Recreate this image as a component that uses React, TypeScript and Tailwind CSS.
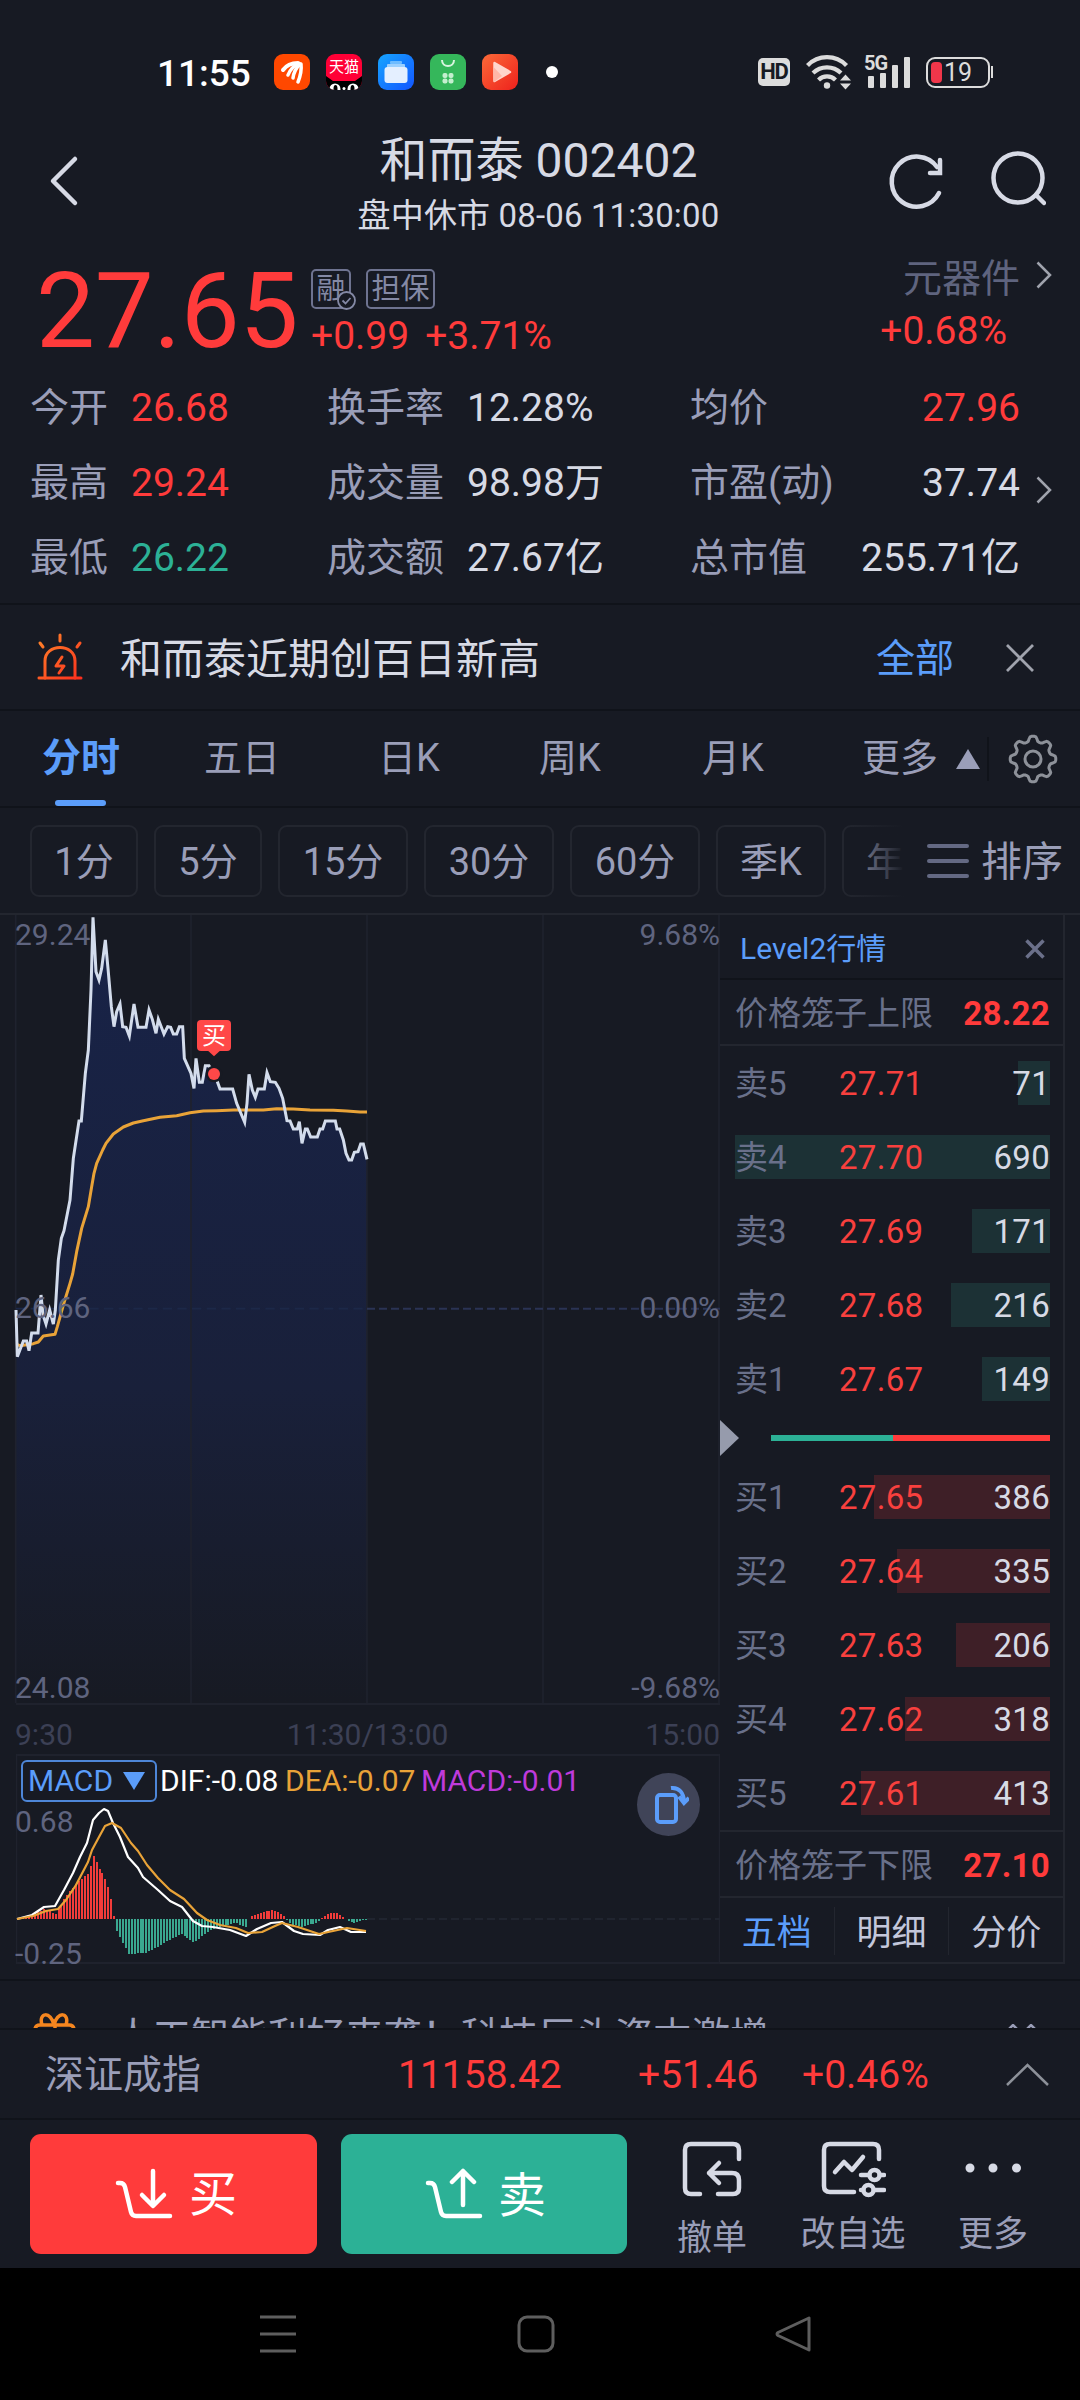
import type { ReactNode } from "react";

const sells = [
    { label: "卖5", price: "27.71", volume: 71 },
    { label: "卖4", price: "27.70", volume: 690 },
    { label: "卖3", price: "27.69", volume: 171 },
    { label: "卖2", price: "27.68", volume: 216 },
    { label: "卖1", price: "27.67", volume: 149 },
];

const buys = [
    { label: "买1", price: "27.65", volume: 386 },
    { label: "买2", price: "27.64", volume: 335 },
    { label: "买3", price: "27.63", volume: 206 },
    { label: "买4", price: "27.62", volume: 318 },
    { label: "买5", price: "27.61", volume: 413 },
];

const maxVolume = 690;

const stats = [
    ["今开", "26.68", "text-[#ff3b3b]", "换手率", "12.28%", "均价", "27.96", "text-[#ff3b3b]"],
    ["最高", "29.24", "text-[#ff3b3b]", "成交量", "98.98万", "市盈(动)", "37.74", "text-[#d7dae5]"],
    ["最低", "26.22", "text-[#2cb196]", "成交额", "27.67亿", "总市值", "255.71亿", "text-[#d7dae5]"],
];

const periods = [
    { name: "1分", width: "w-[108px]" },
    { name: "5分", width: "w-[108px]" },
    { name: "15分", width: "w-[130px]" },
    { name: "30分", width: "w-[130px]" },
    { name: "60分", width: "w-[130px]" },
    { name: "季K", width: "w-[110px]" },
    { name: "年K", width: "w-[110px]" },
];

// Las coordenadas del precio van a 3 unidades por pixel
const priceLine =
    "48,1200 52,1340 70,1293 80,1293 87,1322 95,1269 114,1269 123,1155 129,1215 138,1242 149,1200 160,1242 166,1200 175,1050 184,985 192,962 210,870 220,745 237,633 244,633 256,490 265,420 273,240 279,22 288,185 297,210 305,175 316,90 324,175 334,290 342,350 350,305 360,282 368,350 378,352 388,378 402,282 414,352 438,352 447,300 457,328 468,370 475,328 492,372 503,350 512,352 520,372 530,372 538,350 548,350 553,445 573,490 582,535 588,445 598,517 607,517 616,467 627,467 642,492 652,515 660,537 698,537 710,580 734,637 741,580 747,493 757,540 766,562 774,537 793,537 801,488 811,515 826,517 837,535 848,565 861,632 870,633 880,657 892,657 898,635 906,700 916,657 922,657 932,681 952,681 960,657 968,657 976,633 1006,633 1011,657 1019,657 1030,690 1038,730 1047,750 1055,750 1063,727 1074,725 1082,702 1090,702 1101,748";

const averageLine =
    "50,1303 60,1307 100,1301 115,1296 130,1278 165,1273 172,1250 190,1185 210,1120 218,1092 230,1025 245,955 265,890 275,830 282,790 290,760 308,720 318,700 340,672 370,651 400,639 430,632 480,622 530,617 570,608 610,603 650,602 700,600 790,600 830,596 880,597 930,600 1000,601 1040,603 1080,606 1101,606";

const difLine =
    "17,1919 32,1915 44,1907 55,1906 64,1890 73,1873 80,1857 87,1843 93,1820 99,1813 104,1809 108,1811 113,1823 120,1837 128,1857 138,1868 143,1877 158,1890 170,1901 182,1907 193,1921 202,1926 213,1927 230,1930 246,1936 257,1929 271,1923 282,1922 294,1931 303,1934 320,1935 328,1930 340,1927 351,1932 366,1932";

const deaLine =
    "17,1919 33,1916 46,1911 58,1909 66,1900 76,1885 88,1862 92,1850 99,1837 105,1826 112,1823 121,1828 131,1843 138,1851 147,1865 158,1878 170,1890 184,1899 197,1913 207,1920 220,1925 236,1928 248,1933 262,1932 275,1926 282,1923 298,1927 319,1934 333,1931 347,1928 366,1931";

const macdShape = [
    [16, 0], [30, 3], [43, 10], [55, 5], [64, 22], [78, 38], [88, 46], [93, 63], [99, 50], [105, 38],
    [109, 25], [112, 10], [113.5, 0], [115, -10], [120, -20], [128, -35], [145, -34], [158, -27],
    [170, -20], [181, -15], [193, -24], [205, -14], [215, -9], [235, -4], [245, -8], [248, 0],
    [250, 3], [262, 7], [272, 9], [282, 4], [285, 0], [290, -5], [300, -8], [315, -4], [320, 0],
    [325, 4], [335, 7], [345, 0], [352, -4], [368, 0],
];

function macdAt(x: number) {
    for (let i = 1; i < macdShape.length; i++) {
        const [x0, y0] = macdShape[i - 1];
        const [x1, y1] = macdShape[i];
        if (x <= x1) return y0 + ((y1 - y0) * (x - x0)) / (x1 - x0);
    }
    return 0;
}

const macdBars = Array.from({ length: 120 }, (_, i) => {
    const x = Math.round(16.5 + i * 2.93);
    return { x, h: Math.round(macdAt(x)) };
});

function StatusBar() {
    return (
        <div className="flex h-[118px] items-center pt-[26px] pl-[157px] text-white">
            <span className="w-[117px] pt-[2px] text-[37px] leading-none font-medium">11:55</span>
            <div className="flex gap-4">
                <svg width="36" height="36" viewBox="0 0 36 36">
                    <rect width="36" height="36" rx="9" fill="#ff4800" />
                    <g fill="none" stroke="#fff" strokeLinecap="round">
                        <path d="M9 16 Q14 9 24 9" strokeWidth="4" />
                        <path d="M14 21 Q17 13 25 9.500" strokeWidth="3.500" />
                        <path d="M19 24 Q20 16 26 10" strokeWidth="3.500" />
                        <path d="M24 28 Q28 18 27 10" strokeWidth="3.500" />
                    </g>
                </svg>
                <div className="relative h-9 w-9 overflow-hidden rounded-[9px] bg-[#ff0036]">
                    <svg className="absolute inset-0" width="36" height="36" viewBox="0 0 36 36">
                        <path d="M0 22 L7 27 H29 L36 22 V36 H0Z" fill="#000" />
                        <circle cx="9" cy="35" r="5.500" fill="#fff" />
                        <circle cx="27" cy="35" r="5.500" fill="#fff" />
                        <ellipse cx="9.500" cy="35" rx="2" ry="4" fill="#000" />
                        <ellipse cx="26.500" cy="35" rx="2" ry="4" fill="#000" />
                        <circle cx="18" cy="34.500" r="1.500" fill="#fff" />
                    </svg>
                    <span className="absolute top-[6px] left-[3px] text-[15px] leading-none">天猫</span>
                </div>
                <svg width="36" height="36" viewBox="0 0 36 36">
                    <defs>
                        <linearGradient id="files" x1="0" y1="0" x2="1" y2="1">
                            <stop offset="0" stopColor="#16a5ff" />
                            <stop offset="1" stopColor="#1355ff" />
                        </linearGradient>
                    </defs>
                    <rect width="36" height="36" rx="9" fill="url(#files)" />
                    <rect x="12" y="7" width="12" height="3" rx="1" fill="#6fbcff" />
                    <rect x="9" y="10" width="18" height="4" rx="1" fill="#9bd0ff" />
                    <rect x="6.500" y="13" width="23" height="16" rx="3" fill="#e4efff" />
                </svg>
                <svg width="36" height="36" viewBox="0 0 36 36">
                    <rect width="36" height="36" rx="9" fill="#35b75b" />
                    <path d="M12 6 C12 14 24 14 24 6" fill="none" stroke="#d8f5df" strokeWidth="2" />
                    <g fill="#c4efcf">
                        <rect x="12.500" y="19" width="5" height="5" rx="2" />
                        <rect x="18.500" y="19" width="5" height="5" rx="2" />
                        <rect x="12.500" y="24.500" width="5" height="5" rx="2" />
                        <rect x="18.500" y="24.500" width="5" height="5" rx="2" />
                    </g>
                </svg>
                <svg width="36" height="36" viewBox="0 0 36 36">
                    <defs>
                        <linearGradient id="video" x1="0" y1="0" x2="1" y2="1">
                            <stop offset="0" stopColor="#fb6a38" />
                            <stop offset="1" stopColor="#ee211c" />
                        </linearGradient>
                    </defs>
                    <rect width="36" height="36" rx="9" fill="url(#video)" />
                    <path d="M12.500 9 L28 18 L12.500 27Z" fill="#ffd6cc" stroke="#ffd6cc" strokeWidth="2.500" strokeLinejoin="round" />
                    <path d="M11.500 13 L20 22 L12 28Z" fill="#ffb8a8" />
                </svg>
            </div>
            <span className="ml-7 h-3 w-3 rounded-full bg-white" />
            <div className="ml-[200px] flex items-center">
                <span className="flex h-7 w-8 items-center justify-center rounded-[5px] bg-[#dcdcdc] text-[22px] leading-none font-bold tracking-tighter text-[#171a23]">
                    HD
                </span>
                <svg className="ml-4" width="45" height="36" viewBox="0 0 45 36" fill="none" stroke="#dcdcdc" strokeWidth="4.200">
                    <path d="M1.500 11.500 A27 27 0 0 1 40.500 11.500" />
                    <path d="M7 19 A20 20 0 0 1 35 19" />
                    <path d="M12.500 26 A12 12 0 0 1 29.500 26" />
                    <circle cx="21" cy="31.500" r="3.200" fill="#dcdcdc" stroke="none" />
                    <path d="M39.500 20.500 L45 26.500 H34Z M39.500 35.500 L45 29.500 H34Z" fill="#dcdcdc" stroke="none" />
                </svg>
                <div className="relative ml-[13px] h-9 w-[47px]">
                    <span className="absolute -top-px left-0 text-[20px] leading-none font-bold tracking-tighter text-[#dcdcdc]">5G</span>
                    <svg width="47" height="36" viewBox="0 0 47 36" fill="#dcdcdc">
                        <rect x="4" y="22" width="6" height="12" rx="1" />
                        <rect x="16" y="19" width="6" height="15" rx="1" />
                        <rect x="28" y="11" width="6" height="23" rx="1" />
                        <rect x="40" y="3" width="6" height="31" rx="1" />
                    </svg>
                </div>
                <div className="ml-[15px] flex h-[31px] w-[64px] items-center rounded-[9px] border-2 border-[#dcdcdc] pl-[3px]">
                    <span className="h-[21px] w-[11px] rounded-[4px] bg-[#f0364a]" />
                    <span className="ml-[2px] text-[25px] leading-none text-[#dcdcdc]">19</span>
                </div>
                <span className="ml-px h-3 w-[2px] bg-[#dcdcdc]" />
            </div>
        </div>
    );
}

function Header() {
    return (
        <div className="flex h-[132px] justify-between text-[#d7dae5]">
            <svg className="mt-[36px] ml-[48px]" width="142" height="54" viewBox="0 0 142 54" fill="none" stroke="currentColor" strokeWidth="4.500" strokeLinecap="round" strokeLinejoin="round">
                <path d="M27 5 L5 27 L27 49" />
            </svg>
            <div className="flex flex-col items-center pt-[19px]">
                <h1 className="text-[48px] leading-[48px]">和而泰 002402</h1>
                <p className="mt-[13px] text-[33px] leading-[36px] tracking-[0.15px]">盘中休市 08-06 11:30:00</p>
            </div>
            <div className="mt-[32px] mr-[34px] flex gap-[43px]">
                <svg width="58" height="62" viewBox="0 0 58 62" fill="none" stroke="currentColor" strokeWidth="4.500" strokeLinecap="round">
                    <path d="M52 43 A25 25 0 1 1 50 17" />
                    <path d="M53 10 V23 H43" />
                </svg>
                <svg width="58" height="62" viewBox="0 0 58 62" fill="none" stroke="currentColor" strokeWidth="4.500" strokeLinecap="round">
                    <circle cx="30" cy="28" r="24.500" />
                    <path d="M48 45 L56 53" />
                </svg>
            </div>
        </div>
    );
}

function Chevron({ className }: { className?: string }) {
    return (
        <svg className={className} width="16" height="28" viewBox="0 0 16 28" fill="none" stroke="#a0a3ad" strokeWidth="2.500">
            <path d="M1.500 1.500 L14 14 L1.500 26.500" />
        </svg>
    );
}

function Quote() {
    return (
        <div className="h-[355px] border-b-2 border-[#10131a]">
            <div className="flex h-[119px]">
                <span className="w-[274px] pt-[9px] pl-[36px] text-[105px] leading-[105px] tracking-[-0.3px] text-[#ff3b3b]">27.65</span>
                <div className="ml-[37px] w-[500px]">
                    <div className="mt-[19px] flex gap-[15px] text-[29px] leading-none text-[#8489a5]">
                        <span className="relative flex h-[40px] w-[40px] items-center justify-center rounded-[5px] border-2 border-[#6e7390]">
                            融
                            <svg className="absolute -right-[7px] -bottom-[3px]" width="19" height="19" viewBox="0 0 19 19" fill="#171a23" stroke="#8489a5" strokeWidth="1.800">
                                <circle cx="9.500" cy="9.500" r="8.500" />
                                <path d="M5.500 9.500 L8.500 12.500 L13.500 7" fill="none" />
                            </svg>
                        </span>
                        <span className="flex h-[40px] w-[69px] items-center justify-center rounded-[5px] border-2 border-[#6e7390]">担保</span>
                    </div>
                    <p className="mt-[7px] flex gap-[16px] text-[39px] leading-[40px] text-[#ff3b3b]">
                        <span>+0.99</span>
                        <span>+3.71%</span>
                    </p>
                </div>
                <div className="ml-auto flex w-[269px] flex-col">
                    <div className="flex items-center justify-end pr-[28px]">
                        <span className="mt-[9px] text-[39px] leading-[40px] text-[#5f647f]">元器件</span>
                        <Chevron className="ml-[16px]" />
                    </div>
                    <span className="mt-[12px] mr-[73px] text-right text-[39px] leading-[40px] text-[#ff3b3b]">+0.68%</span>
                </div>
            </div>
            {stats.map(([a, av, ac, b, bv, c, cv, cc], i) => (
                <div key={a} className="flex h-[75px] items-center pt-[3px] text-[39px] leading-none whitespace-nowrap text-[#9a9eb8]">
                    <span className="w-[101px] pl-[30px]">{a}</span>
                    <span className={`w-[226px] pl-[30px] ${ac}`}>{av}</span>
                    <span className="w-[140px]">{b}</span>
                    <span className="w-[223px] text-[#d7dae5]">{bv}</span>
                    <span>{c}</span>
                    <span className={`ml-auto ${cc}`}>{cv}</span>
                    <div className="w-[60px] pt-[14px] pl-[16px]">{i === 1 && <Chevron />}</div>
                </div>
            ))}
        </div>
    );
}

function Notice() {
    return (
        <div className="flex h-[106px] items-center border-b-2 border-[#10131a]">
            <svg className="ml-[37px]" width="46" height="48" viewBox="0 0 46 48" fill="none" strokeWidth="3" strokeLinecap="round">
                <defs>
                    <linearGradient id="alarm" gradientUnits="userSpaceOnUse" x1="0" y1="0" x2="46" y2="48">
                        <stop offset="0" stopColor="#ff8a2a" />
                        <stop offset="1" stopColor="#fb2a1d" />
                    </linearGradient>
                </defs>
                <g stroke="url(#alarm)">
                    <path d="M23.010 2 L23 8 M3 10 L6 14 M43 10 L40 14 M2 45 L44 45.010" />
                    <path d="M8 45 V28 C8 10 38 10 38 28 V45" />
                    <path d="M25 24 L19 33 H27 L22 40" strokeLinejoin="round" />
                </g>
            </svg>
            <span className="ml-[37px] pt-[5px] text-[42px] leading-none text-[#d7dae5]">和而泰近期创百日新高</span>
            <span className="ml-auto pt-[5px] text-[39px] leading-none text-[#5b9dfa]">全部</span>
            <svg className="mt-[2px] mr-[45px] ml-[51px]" width="30" height="30" viewBox="0 0 30 30" stroke="#a0a3ad" strokeWidth="2.800">
                <path d="M2 2 L28 28 M28 2 L2 28" />
            </svg>
        </div>
    );
}

function gearPath() {
    const pts: string[] = [];
    for (let i = 0; i <= 96; i++) {
        const a = (i / 96) * Math.PI * 2;
        const r = 20.300 + 2.600 * Math.tanh(2 * Math.cos(a * 8));
        pts.push(`${(25 + r * Math.sin(a)).toFixed(1)},${(25 - r * Math.cos(a)).toFixed(1)}`);
    }
    return pts.join(" ");
}

function Tabs() {
    return (
        <div className="flex h-[97px] border-b-2 border-[#10131a] text-[38px] leading-[95px] text-[#9a9eb8]">
            <div className="relative ml-[42px] w-[162px] text-[39px] font-semibold text-[#5b9dfa]">
                分时
                <span className="absolute bottom-0 left-[13px] h-[6px] w-[51px] rounded-[3px] bg-[#5b9dfa]" />
            </div>
            <span className="w-[174px]">五日</span>
            <span className="w-[161px]">日K</span>
            <span className="w-[163px]">周K</span>
            <span className="w-[160px]">月K</span>
            <span>更多</span>
            <div className="ml-[18px] flex items-center">
                <svg width="24" height="20" viewBox="0 0 24 20" fill="#9a9eb8">
                    <path d="M12 0 L24 20 H0Z" />
                </svg>
                <span className="ml-[7px] h-[44px] w-[2px] bg-[#10131a]" />
                <svg className="ml-[19px]" width="50" height="50" viewBox="0 0 50 50" fill="none" stroke="#8d9199" strokeWidth="3">
                    <polygon points={gearPath()} strokeLinejoin="round" />
                    <circle cx="25" cy="25" r="8" />
                </svg>
            </div>
        </div>
    );
}

function Periods() {
    return (
        <div className="flex h-[105px] items-center">
            <div className="relative flex w-[904px] gap-[16px] overflow-hidden pl-[30px] text-[38px] text-[#9a9eb8]">
                {periods.map((p) => (
                    <span key={p.name} className={`${p.width} flex h-[72px] shrink-0 items-center justify-center rounded-[9px] border-2 border-[#23262f] pt-[4px]`}>
                        {p.name}
                    </span>
                ))}
                <span className="absolute top-0 right-0 h-full w-[60px] bg-linear-to-r from-transparent to-[#171a23]" />
            </div>
            <div className="ml-[23px] flex h-[34px] w-[42px] flex-col justify-between">
                <span className="h-[4px] rounded bg-[#646983]" />
                <span className="h-[4px] rounded bg-[#646983]" />
                <span className="h-[4px] rounded bg-[#646983]" />
            </div>
            <span className="ml-[12px] pt-[4px] text-[41px] text-[#9a9eb8]">排序</span>
        </div>
    );
}

function PriceChart() {
    return (
        <div className="relative h-[790px] border-b-2 border-[#1f222d] text-[30px] leading-none text-[#5f647f]">
            <svg className="overflow-visible" width="704" height="788" viewBox="48 15 2112 2364" fill="none">
                <defs>
                    <linearGradient id="area" x1="0" y1="0" x2="0" y2="1">
                        <stop offset="0" stopColor="#182348" />
                        <stop offset="0.6" stopColor="#19203a" />
                        <stop offset="1" stopColor="#171a23" />
                    </linearGradient>
                </defs>
                <path d={`M48,2379 L${priceLine} L1101,2379Z`} fill="url(#area)" />
                <path d="M47 15 V2379 M573 15 V2379 M1101 15 V2379 M1629 15 V2379 M2157 15 V2379" stroke="#1f222e" strokeWidth="5" />
                <path d="M48 1196 H1101" stroke="#1c2848" strokeWidth="5" strokeDasharray="28 16" />
                <path d="M1101 1196 H2160" stroke="#2a3354" strokeWidth="6" strokeDasharray="24 12" />
                <polyline points={averageLine} stroke="#e9a338" strokeWidth="9" strokeLinejoin="round" />
                <polyline points={priceLine} stroke="#d3dcec" strokeWidth="9" />
                <circle cx="642" cy="492" r="25" fill="#171a23" />
                <circle cx="642" cy="492" r="18" fill="#ff4848" />
                <path d="M624 422 L642 439 L660 422Z" fill="#ff4848" />
            </svg>
            <span className="absolute top-[105px] left-[181px] flex h-[31px] w-[34px] items-center justify-center rounded-[4px] bg-[#ff4848] text-[24px] text-white">
                买
            </span>
            <span className="absolute top-[5px] -left-px">29.24</span>
            <span className="absolute top-[5px] right-0">9.68%</span>
            <span className="absolute top-[378px] -left-px">26.66</span>
            <span className="absolute top-[378px] right-0">0.00%</span>
            <span className="absolute bottom-0 -left-px">24.08</span>
            <span className="absolute right-0 bottom-0">-9.68%</span>
        </div>
    );
}

function MacdChart() {
    return (
        <div className="relative h-[210px] border-t-2 border-b-2 border-[#1f222d] text-[30px] leading-none text-[#5f647f]">
            <svg className="absolute -top-[2px] left-0" width="704" height="210" viewBox="16 1754 704 210" fill="none">
                <path d="M16.500 1754 V1964 M719.500 1754 V1964" stroke="#1f222d" strokeWidth="1.500" />
                <path d="M367 1919 H720" stroke="#20242f" strokeWidth="2" strokeDasharray="8 4" />
                {macdBars.map((b) => (
                    <rect
                        key={b.x}
                        x={b.x}
                        y={b.h > 0 ? 1919 - b.h : 1919}
                        width="2"
                        height={Math.abs(b.h)}
                        fill={b.h > 0 ? "#f23c3a" : "#3aa890"}
                    />
                ))}
                <polyline points={difLine} stroke="#fff" strokeWidth="2.200" strokeLinejoin="round" />
                <polyline points={deaLine} stroke="#e9a338" strokeWidth="2.200" strokeLinejoin="round" />
            </svg>
            <div className="relative flex h-[50px] items-center">
                <span className="ml-[5px] flex h-[42px] w-[136px] items-center gap-[10px] rounded-[6px] border-2 border-[#4d86d8] pl-[5px] text-[#5b9dfa]">
                    MACD
                    <svg width="22" height="18" viewBox="0 0 22 18" fill="#5b9dfa">
                        <path d="M0 0 H22 L11 18Z" />
                    </svg>
                </span>
                <span className="ml-[3px] w-[125px] text-white">DIF:-0.08</span>
                <span className="w-[136px] text-[#e9a338]">DEA:-0.07</span>
                <span className="text-[#bf3adb]">MACD:-0.01</span>
            </div>
            <span className="absolute top-[51px] -left-px">0.68</span>
            <span className="absolute top-[183px] -left-px">-0.25</span>
            <span className="absolute top-[17px] right-[20px] flex h-[63px] w-[63px] items-center justify-center rounded-full bg-[#404458]">
                <svg width="40" height="42" viewBox="0 0 40 42" fill="none" stroke="#5b9dfa" strokeWidth="4">
                    <rect x="8" y="11" width="19" height="27" rx="3" />
                    <path d="M22 4 C30 3 35 9 35 18" />
                    <path d="M30 12.500 L35 19 L40 14" />
                </svg>
            </span>
        </div>
    );
}

function DepthRow({ label, price, volume, bar }: { label: string; price: string; volume: number; bar: string }) {
    return (
        <div className="relative flex h-[74px] items-center text-[33px] leading-none">
            <span
                className={`absolute top-[15px] right-[13px] h-[44px] ${bar}`}
                style={{ width: Math.max(32, Math.round((volume / maxVolume) * 315)) }}
            />
            <span className="relative w-[119px] pl-[15px] text-[#69708a]">{label}</span>
            <span className="relative tracking-[0.3px] text-[#f8403e]">{price}</span>
            <span className="relative mr-[13px] ml-auto tracking-[0.3px] text-[#d7dae5]">{volume}</span>
        </div>
    );
}

function CageRow({ label, price }: { label: string; price: string }) {
    return (
        <div className="flex h-[66px] items-center justify-between border-b-2 border-[#23262f] pt-[3px] pr-[13px] pl-[15px] text-[33px] leading-none text-[#69708a]">
            {label}
            <span className="font-bold tracking-[0.3px] text-[#ff3b3b]">{price}</span>
        </div>
    );
}

function OrderBook() {
    return (
        <div className="h-[1049px] w-[345px] border-r-2 border-b-2 border-[#23262f]">
            <div className="flex h-[65px] items-center justify-between border-b-2 border-[#10131a] pt-[4px] pr-[18px] pl-[20px]">
                <span className="text-[30px] leading-none text-[#5b9dfa]">Level2行情</span>
                <svg width="20" height="20" viewBox="0 0 20 20" stroke="#6b708a" strokeWidth="3.500">
                    <path d="M1.500 1.500 L18.500 18.500 M18.500 1.500 L1.500 18.500" />
                </svg>
            </div>
            <CageRow label="价格笼子上限" price="28.22" />
            {sells.map((s) => (
                <DepthRow key={s.label} {...s} bar="bg-[#1c3135]" />
            ))}
            <div className="flex h-[44px] items-center">
                <svg width="19" height="36" viewBox="0 0 19 36" fill="#969bac">
                    <path d="M0 0 L19 18 L0 36Z" />
                </svg>
                <span className="ml-[32px] h-[6px] w-[122px] bg-[#2cb196]" />
                <span className="h-[6px] w-[157px] bg-[#ff3b3b]" />
            </div>
            {buys.map((b) => (
                <DepthRow key={b.label} {...b} bar="bg-[#3e1f27]" />
            ))}
            <div className="border-t-2 border-[#23262f]">
                <CageRow label="价格笼子下限" price="27.10" />
            </div>
            <div className="flex h-[65px] items-center text-[35px] leading-none text-[#c3c7db]">
                <span className="flex-1 pt-[5px] text-center text-[#5b9dfa]">五档</span>
                <span className="h-[48px] w-px bg-[#23262f]" />
                <span className="flex-1 pt-[5px] text-center">明细</span>
                <span className="h-[48px] w-px bg-[#23262f]" />
                <span className="flex-1 pt-[5px] text-center">分价</span>
            </div>
        </div>
    );
}

function NewsPeek() {
    return (
        <div className="mt-[14px] h-[49px] overflow-hidden border-t-2 border-[#10131a]">
            <div className="flex h-[112px] items-center">
                <svg className="ml-[33px]" width="44" height="48" viewBox="0 0 44 48" fill="none" stroke="#f5861f" strokeWidth="3.500">
                    <path d="M9 12 C5 -1 18 -2 21 12 C24 -2 37 -1 33 12" />
                    <path d="M2 24 V17 Q2 12 7 12 H36 Q41 12 41 17 V24 M22 12 V40" />
                </svg>
                <span className="ml-[37px] text-[38.500px] leading-none text-[#9a9eb8]">人工智能利好来袭！科技巨头资本激增</span>
                <svg className="mr-[42px] mb-[6px] ml-auto" width="32" height="20" viewBox="0 0 32 20" fill="none" stroke="#9a9eb8" strokeWidth="2.500">
                    <path d="M2 6 L7 1 L12 6 M20 6 L25 1 L30 6" />
                </svg>
            </div>
        </div>
    );
}

function IndexBar() {
    return (
        <div className="flex h-[92px] items-center border-t-2 border-b-2 border-[#10131a] pt-[2px] text-[39px] leading-none text-[#ff3b3b]">
            <span className="w-[398px] pl-[45px] text-[#9a9eb8]">深证成指</span>
            <span className="w-[240px]">11158.42</span>
            <span className="w-[164px]">+51.46</span>
            <span className="w-[203px]">+0.46%</span>
            <svg width="45" height="24" viewBox="0 0 45 24" fill="none" stroke="#8d9199" strokeWidth="2.500">
                <path d="M2 22 L22.500 2 L43 22" />
            </svg>
        </div>
    );
}

function Action({ label, className, children }: { label: string; className: string; children: ReactNode }) {
    return (
        <div className={`flex flex-col items-center text-[35px] leading-none text-[#9a9eb8] ${className}`}>
            <svg width="66" height="58" viewBox="0 0 66 58" fill="none" stroke="#d7dae5" strokeWidth="4.500" strokeLinecap="round" strokeLinejoin="round">
                {children}
            </svg>
            {label}
        </div>
    );
}

function ActionBar() {
    return (
        <div className="flex h-[148px] pt-[14px] pl-[30px]">
            <div className="flex h-[120px] w-[287px] items-center rounded-[11px] bg-[#ff3b3b] pl-[85px] text-[48px] leading-none text-white">
                <svg width="58" height="52" viewBox="0 0 58 52" fill="none" stroke="currentColor" strokeWidth="4.500" strokeLinecap="round" strokeLinejoin="round">
                    <path d="M3 15 H5 Q9 15 10 19 L16 44 Q17 48 21 48 H55" />
                    <path d="M38 3 V37 M27 27 L38 38 L49 27" />
                </svg>
                <span className="ml-[16px] pt-[2px]">买</span>
            </div>
            <div className="ml-[24px] flex h-[120px] w-[286px] items-center rounded-[11px] bg-[#2cb196] pl-[84px] text-[48px] leading-none text-white">
                <svg width="58" height="52" viewBox="0 0 58 52" fill="none" stroke="currentColor" strokeWidth="4.500" strokeLinecap="round" strokeLinejoin="round">
                    <path d="M3 15 H5 Q9 15 10 19 L16 44 Q17 48 21 48 H55" />
                    <path d="M38 37 V3 M27 14 L38 3 L49 14" />
                </svg>
                <span className="ml-[15px] pt-[4px]">卖</span>
            </div>
            <Action label="撤单" className="ml-[45px] w-[80px] gap-[23px] pt-[6px]">
                <path d="M21 54 H12 Q6 54 6 48 V10 Q6 4 12 4 H54 Q60 4 60 10 V19" />
                <path d="M39 54 H54 Q60 54 60 48 V40 Q60 33 53 33 H30 M40 23 L30 33 L40 43" />
            </Action>
            <Action label="改自选" className="ml-[41px] w-[120px] gap-[19px] pt-[6px]">
                <path d="M34 52 H10 Q4 52 4 46 V10 Q4 4 10 4 H53 Q59 4 59 10 V19" />
                <path d="M15 32 L24 22 L32 30 L43 17" />
                <path d="M41 35 H49 M60 35 H64 M41 50 H43 M54 50 H64" />
                <circle cx="54.500" cy="35" r="5" />
                <circle cx="48.500" cy="50" r="5" />
            </Action>
            <Action label="更多" className="ml-[35px] w-[90px] gap-[19px] pt-[6px]">
                <path d="M10 28 H10.010 M33 28 H33.010 M56.500 28 H56.510" strokeWidth="9" />
            </Action>
        </div>
    );
}

function NavBar() {
    return (
        <div className="flex flex-1 gap-[220px] bg-black pt-[46px] pl-[259px]">
            <svg width="38" height="40" viewBox="0 0 38 40" stroke="#5e5e5e" strokeWidth="3">
                <path d="M1 3 H37 M1 20 H37 M1 37 H37" />
            </svg>
            <svg width="38" height="40" viewBox="0 0 38 40" fill="none" stroke="#5e5e5e" strokeWidth="3">
                <rect x="2" y="3" width="34" height="34" rx="8" />
            </svg>
            <svg width="38" height="40" viewBox="0 0 38 40" fill="none" stroke="#5e5e5e" strokeWidth="3" strokeLinejoin="round">
                <path d="M34 4 V36 L3 21.500 Q1 20 3 18.500Z" />
            </svg>
        </div>
    );
}

export default function App() {
    return (
        <div className="flex h-[2400px] w-[1080px] flex-col overflow-hidden bg-[#171a23] font-['Roboto','Noto_Sans_CJK_SC',sans-serif]">
            <StatusBar />
            <Header />
            <Quote />
            <Notice />
            <Tabs />
            <Periods />
            <div className="flex h-[1052px] border-t-2 border-[#23262f]">
                <div className="ml-[16px] w-[704px]">
                    <PriceChart />
                    <div className="flex h-[49px] items-center justify-between pt-[10px] text-[30px] leading-none text-[#3c4055]">
                        <span className="-ml-px">9:30</span>
                        <span className="ml-[17px]">11:30/13:00</span>
                        <span>15:00</span>
                    </div>
                    <MacdChart />
                </div>
                <OrderBook />
            </div>
            <NewsPeek />
            <IndexBar />
            <ActionBar />
            <NavBar />
        </div>
    );
}
